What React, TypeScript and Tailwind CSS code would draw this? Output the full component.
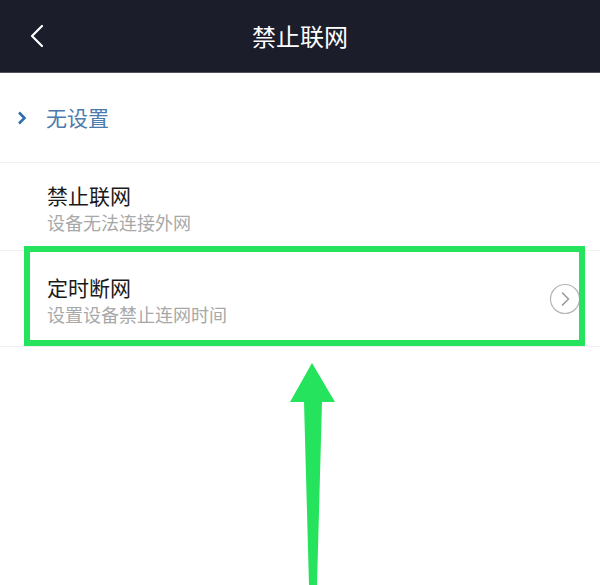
const font = { fontFamily: '"Noto Sans CJK SC", "Noto Sans", sans-serif' }

function CircleChevron() {
  return (
    <svg width="32" height="32" viewBox="0 0 32 32" fill="none">
      <circle cx="16" cy="16" r="14.5" stroke="#b5b5b5" strokeWidth="1.2" />
      <path d="M13.5 10 L19.5 16 L13.5 22" stroke="#9a9a9a" strokeWidth="1.6" strokeLinecap="round" strokeLinejoin="round" />
    </svg>
  )
}

export default function App() {
  return (
    <div className="relative w-[600px] h-[585px] bg-white overflow-hidden" style={font}>
      {/* header */}
      <div className="relative h-[73px] bg-[#1b1d2b] border-b border-[#50525c] flex items-center justify-center">
        <svg className="absolute left-[28px] top-[24px]" width="18" height="24" viewBox="0 0 18 24">
          <path d="M14 2 L4 12 L14 22" stroke="#ffffff" strokeWidth="2.2" fill="none" strokeLinecap="round" strokeLinejoin="round" />
        </svg>
        <span className="text-[24px] text-white leading-none">禁止联网</span>
      </div>

      {/* current setting */}
      <div className="h-[90px] flex items-center border-b border-[#f0f0f0]">
        <svg className="ml-[17px] mr-[19px]" width="10" height="14" viewBox="0 0 10 14">
          <path d="M2 1.5 L7.5 7 L2 12.5" stroke="#2f6fb0" strokeWidth="2.6" fill="none" strokeLinejoin="miter" />
        </svg>
        <span className="text-[21px] text-[#4a7bab] leading-none">无设置</span>
      </div>

      {/* option rows */}
      <div className="h-[88px] flex flex-col justify-center pl-[47px] pt-[5px] border-b border-[#f0f0f0]">
        <span className="text-[21px] text-[#1a1a1a] leading-[27px]">禁止联网</span>
        <span className="text-[18px] text-[#a8a8a8] leading-[27px]">设备无法连接外网</span>
      </div>
      <div className="h-[96px] flex items-center justify-between pl-[47px] pr-[19px] border-b border-[#f0f0f0]">
        <div className="flex flex-col pt-[4px]">
          <span className="text-[21px] text-[#1a1a1a] leading-[27px]">定时断网</span>
          <span className="text-[18px] text-[#a8a8a8] leading-[27px]">设置设备禁止连网时间</span>
        </div>
        <CircleChevron />
      </div>

      {/* highlight box */}
      <div className="absolute left-[24px] top-[246px] w-[561px] h-[100px] border-[6px] border-[#26e35d]" />

      {/* arrow */}
      <svg className="absolute left-0 top-0" width="600" height="585" viewBox="0 0 600 585">
        <polygon points="312,363 335,402 322,402 317,585 309,585 304,402 290,402" fill="#26e35d" />
      </svg>
    </div>
  )
}
